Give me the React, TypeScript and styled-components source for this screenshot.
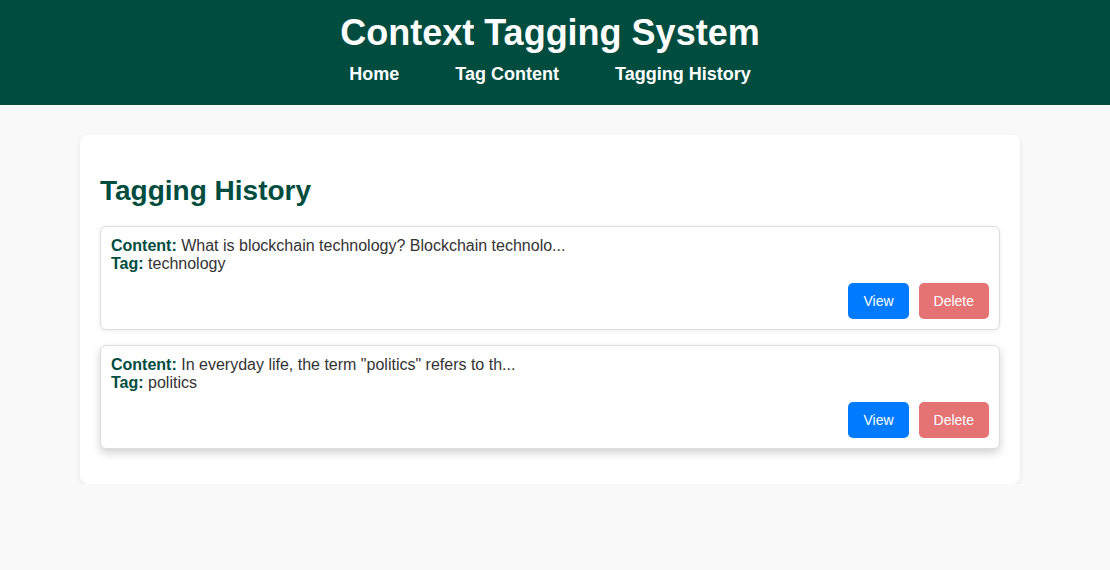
import React from "react";
import styled, { createGlobalStyle } from "styled-components";

const Global = createGlobalStyle`
  html, body { margin: 0; padding: 0; }
  body {
    background: #f9f9f9;
    font-family: "Liberation Sans", Arial, sans-serif;
    color: #333;
  }
`;

const Header = styled.header`
  background: #004d40;
  color: #fff;
  text-align: center;
  padding: 12px 10px 20px 0;
  height: 105px;
  box-sizing: border-box;
`;

const Title = styled.h1`
  margin: 0 0 11px;
  font-size: 36px;
  line-height: 41px;
  font-weight: bold;
`;

const Nav = styled.nav`
  display: flex;
  justify-content: center;
  gap: 56px;
`;

const NavLink = styled.a`
  color: #fff;
  font-weight: bold;
  font-size: 18px;
  line-height: 21px;
  text-decoration: none;
`;

const Main = styled.main`
  display: flex;
  justify-content: center;
  padding: 30px 10px 0 0;
`;

const Panel = styled.section`
  width: 940px;
  box-sizing: border-box;
  background: #fff;
  border-radius: 8px;
  box-shadow: 0 2px 5px rgba(0, 0, 0, 0.08);
  padding: 20px 20px 20px;
`;

const Heading = styled.h2`
  color: #004d40;
  font-size: 28px;
  line-height: 32px;
  margin: 20px 0 19px;
`;

const Item = styled.div<{ $raised?: boolean }>`
  border: 1px solid #ddd;
  border-radius: 6px;
  padding: 10px;
  margin-bottom: 15px;
  background: #fff;
  box-shadow: ${(p) =>
    p.$raised ? "0 4px 8px rgba(0, 0, 0, 0.18)" : "0 1px 4px rgba(0, 0, 0, 0.08)"};
`;

const Line = styled.div`
  font-size: 16px;
  line-height: 18px;
  color: #333;
`;

const Label = styled.strong`
  color: #004d40;
`;

const Actions = styled.div`
  display: flex;
  justify-content: flex-end;
  gap: 10px;
  margin-top: 10px;
`;

const Button = styled.button<{ $variant: "view" | "delete" }>`
  font-family: "Liberation Sans", Arial, sans-serif;
  font-size: 14px;
  line-height: 16px;
  padding: 10px 15px;
  border: none;
  border-radius: 5px;
  color: #fff;
  cursor: pointer;
  background: ${(p) => (p.$variant === "view" ? "#007bff" : "#e57373")};
`;

const entries = [
  {
    content: "What is blockchain technology? Blockchain technolo...",
    tag: "technology",
  },
  {
    content: 'In everyday life, the term "politics" refers to th...',
    tag: "politics",
    raised: true,
  },
];

export default function App() {
  return (
    <>
      <Global />
      <Header>
        <Title>Context Tagging System</Title>
        <Nav>
          <NavLink>Home</NavLink>
          <NavLink>Tag Content</NavLink>
          <NavLink>Tagging History</NavLink>
        </Nav>
      </Header>
      <Main>
        <Panel>
          <Heading>Tagging History</Heading>
          {entries.map((e, i) => (
            <Item key={i} $raised={e.raised}>
              <Line>
                <Label>Content:</Label> {e.content}
              </Line>
              <Line>
                <Label>Tag:</Label> {e.tag}
              </Line>
              <Actions>
                <Button $variant="view">View</Button>
                <Button $variant="delete">Delete</Button>
              </Actions>
            </Item>
          ))}
        </Panel>
      </Main>
    </>
  );
}
